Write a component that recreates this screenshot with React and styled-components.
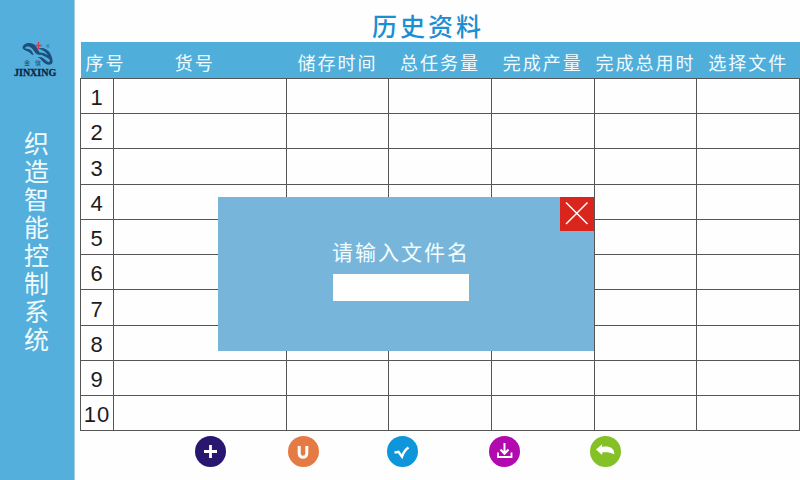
import React, { useState } from 'react';
import styled, { createGlobalStyle } from 'styled-components';

const GlobalStyle = createGlobalStyle`
  * { box-sizing: border-box; }
  body {
    margin: 0;
    background: #fefefe;
    font-family: "Liberation Sans", "Noto Sans CJK SC", sans-serif;
  }
`;

const Page = styled.div`
  display: flex;
  min-height: 100vh;
`;

const Sidebar = styled.aside`
  display: flex;
  flex: none;
  flex-direction: column;
  align-items: center;
  width: 75px;
  padding-top: 40px;
  background: #55afdc;
  border-right: 1px solid #a9cfe2;
`;

const Logo = styled.svg`
  display: block;
  width: 48px;
  height: 40px;
`;

const SystemName = styled.h2`
  margin: 51px 0 0;
  padding-right: 5px;
  writing-mode: vertical-rl;
  font-size: 25px;
  line-height: 28px;
  letter-spacing: 3px;
  font-weight: 400;
  color: #eefcff;
`;

const Main = styled.main`
  display: flex;
  flex: 1;
  flex-direction: column;
  min-width: 0;
  padding-left: 5px;
`;

const Title = styled.h1`
  margin: 0;
  padding: 12px 24px 0 0;
  font-size: 25px;
  line-height: 30px;
  letter-spacing: 3px;
  font-weight: 500;
  text-align: center;
  color: #1c8fd2;
`;

const TableArea = styled.section`
  position: relative;
`;

const Table = styled.table`
  width: 100%;
  table-layout: fixed;
  border-collapse: collapse;
`;

const Column = styled.col`
  width: ${({ $width }) => $width};
`;

const headerPadding = {
  start: '8px 0 0 5px',
  wide: '8px 10px 0 0',
  normal: '8px 0 0',
};

const HeaderCell = styled.th`
  height: 36px;
  padding: ${({ $kind }) => headerPadding[$kind || 'normal']};
  background: #50aedb;
  color: #f1fcff;
  font-size: 18px;
  line-height: 26px;
  letter-spacing: 2px;
  font-weight: 400;
  text-align: ${({ $kind }) => ($kind === 'start' ? 'left' : 'center')};
  white-space: nowrap;
`;

const Row = styled.tr`
  height: 35px;
  &:nth-child(4n + 3) { height: 36px; }
`;

const Cell = styled.td`
  padding: 0;
  border: 1px solid #555;
`;

const IndexCell = styled(Cell)`
  padding-top: 5px;
  font-size: 22px;
  line-height: 24px;
  letter-spacing: 1px;
  text-align: center;
  color: #1d1b1c;
`;

const Dialog = styled.form`
  position: absolute;
  top: 155px;
  left: 138px;
  display: flex;
  flex-direction: column;
  align-items: center;
  width: 376px;
  padding: 41px 10px 50px 0;
  background: #77b5da;
`;

const DialogLabel = styled.label`
  margin-bottom: 6px;
  font-size: 21px;
  line-height: 30px;
  letter-spacing: 2px;
  color: #f2fdff;
`;

const NameInput = styled.input`
  width: 136px;
  height: 27px;
  padding: 0 6px;
  border: 0;
  border-radius: 0;
  background: #fff;
  font-size: 18px;
  outline: none;
`;

const CloseButton = styled.button`
  position: absolute;
  top: 0;
  right: 0;
  width: 34px;
  height: 34px;
  padding: 0;
  border: 0;
  background: #da251d;
  cursor: pointer;
`;

const Toolbar = styled.nav`
  display: grid;
  grid-template-columns: 93px 99px 102px 101px 30px;
  padding: 5px 0 0 115px;
`;

const RoundButton = styled.button`
  width: 31px;
  height: 31px;
  padding: 0;
  border: 0;
  border-radius: 50%;
  background: ${({ $color }) => $color};
  cursor: pointer;
`;

const Glyph = styled.svg`
  display: block;
  width: 100%;
  height: 100%;
  fill: none;
  stroke: #fff;
`;

const columns = [
  { label: '序号', width: '33px', kind: 'start' },
  { label: '货号', width: '24%', kind: 'wide' },
  { label: '储存时间' },
  { label: '总任务量' },
  { label: '完成产量' },
  { label: '完成总用时' },
  { label: '选择文件' },
];

const rows = [1, 2, 3, 4, 5, 6, 7, 8, 9, 10];

const actions = [
  {
    label: '新增',
    color: '#29166f',
    icon: <path d="M15.500 9v13M9 15.500h13" strokeWidth="2.800" />,
  },
  {
    label: 'U盘',
    color: '#e67a45',
    icon: <path d="M11.200 10v7.500c0 5 7.600 5 7.600 0V10" strokeWidth="3" />,
  },
  {
    label: '确认',
    color: '#0f96da',
    icon: <path d="M7.500 16.700l4-.9 3.500 4.800c1.200-3.400 3.200-6.800 6.500-9" strokeWidth="2.400" />,
  },
  {
    label: '保存',
    color: '#b10aae',
    icon: (
      <>
        <path d="M15.500 7v10.500M11.500 13.500l4 4.200 4-4.200" strokeWidth="2" />
        <path d="M9 16.500v4.500h13.500v-4.500" strokeWidth="1.800" />
      </>
    ),
  },
  {
    label: '返回',
    color: '#83c127',
    icon: (
      <path
        d="M6 13.400L12 8.200v2.600c7-1.300 12.600.7 12.400 7.800-3.400-2.200-7.200-2.400-12.200-2.200v2.500z"
        fill="#fff"
        stroke="none"
      />
    ),
  },
];

function BrandLogo() {
  return (
    <Logo viewBox="0 0 48 40" role="img" aria-label="JINXING">
      <g fill="#1b4f7c">
        <path d="M9.500 8C10 4 14 2.600 18 3.200c4.500.8 6 4.300 7.500 7.300.8 1.700 1.700 3.200 3 4.500-3 .3-5.500-.8-7-3.200-1.700-2.800-3.500-5-6.500-5.300-1.500 0-2.700.5-3 1.700 2 .8 3.500.5 5 1.300 2 1 2.500 3.300 3.800 5.500-3-.3-3.800-2.800-5.800-3.500C13 10.800 11 10.300 9.500 8z" />
        <path d="M24.500 8.500c5.500-1.700 10 .5 12.500 4.500 1.800 3 3 7 2.500 9.500-.8 2.800-4.500 2.800-7.500 1-3-2-4-5-7.500-6.500 4-.5 6.500 1.500 8.500 3.500 1.500 1.500 3.200 1.800 3.800.8.600-1.300-.8-2.500-2.600-3.600-3.200-2-5.700-2.200-8.700-5.200 3.500-.5 6.500.8 9.500 3-2-3.500-5.500-6-10.500-7z" />
      </g>
      <path d="M25.500 2v7M22.300 5.500h6.400" stroke="#db344c" strokeWidth="1.400" />
      <path d="M34 4.500v3M36.500 4.500L34.500 6l2 1.500" fill="none" stroke="#356a90" strokeWidth="0.800" />
      <g fill="#17466b" fontSize="6" fontFamily="Noto Sans CJK SC, sans-serif">
        <text x="11" y="25">金</text>
        <text x="22" y="25">信</text>
      </g>
      <text x="1" y="36" fontSize="10" fontWeight="700" fontFamily="Liberation Serif, serif" fill="#0c2740" stroke="#0c2740" strokeWidth="0.300">
        JINXING
      </text>
    </Logo>
  );
}

export default function App() {
  const [open, setOpen] = useState(true);
  const [name, setName] = useState('');

  return (
    <>
      <GlobalStyle />
      <Page>
        <Sidebar>
          <BrandLogo />
          <SystemName>织造智能控制系统</SystemName>
        </Sidebar>
        <Main>
          <Title>历史资料</Title>
          <TableArea>
            <Table>
              <colgroup>
                {columns.map((c) => (
                  <Column key={c.label} $width={c.width} />
                ))}
              </colgroup>
              <thead>
                <tr>
                  {columns.map((c) => (
                    <HeaderCell key={c.label} scope="col" $kind={c.kind}>
                      {c.label}
                    </HeaderCell>
                  ))}
                </tr>
              </thead>
              <tbody>
                {rows.map((n) => (
                  <Row key={n}>
                    <IndexCell>{n}</IndexCell>
                    {columns.slice(1).map((c) => (
                      <Cell key={c.label} />
                    ))}
                  </Row>
                ))}
              </tbody>
            </Table>
            {open && (
              <Dialog role="dialog" aria-labelledby="file-label" onSubmit={(e) => e.preventDefault()}>
                <DialogLabel id="file-label" htmlFor="file-name">请输入文件名</DialogLabel>
                <NameInput id="file-name" value={name} onChange={(e) => setName(e.target.value)} />
                <CloseButton type="button" aria-label="关闭" onClick={() => setOpen(false)}>
                  <Glyph viewBox="0 0 34 34">
                    <path d="M6 5.500l21.500 21.500M27.500 5.500L6 27" strokeWidth="1.500" />
                  </Glyph>
                </CloseButton>
              </Dialog>
            )}
          </TableArea>
          <Toolbar aria-label="操作">
            {actions.map((a) => (
              <RoundButton key={a.label} type="button" aria-label={a.label} $color={a.color}>
                <Glyph viewBox="0 0 31 31">{a.icon}</Glyph>
              </RoundButton>
            ))}
          </Toolbar>
        </Main>
      </Page>
    </>
  );
}
